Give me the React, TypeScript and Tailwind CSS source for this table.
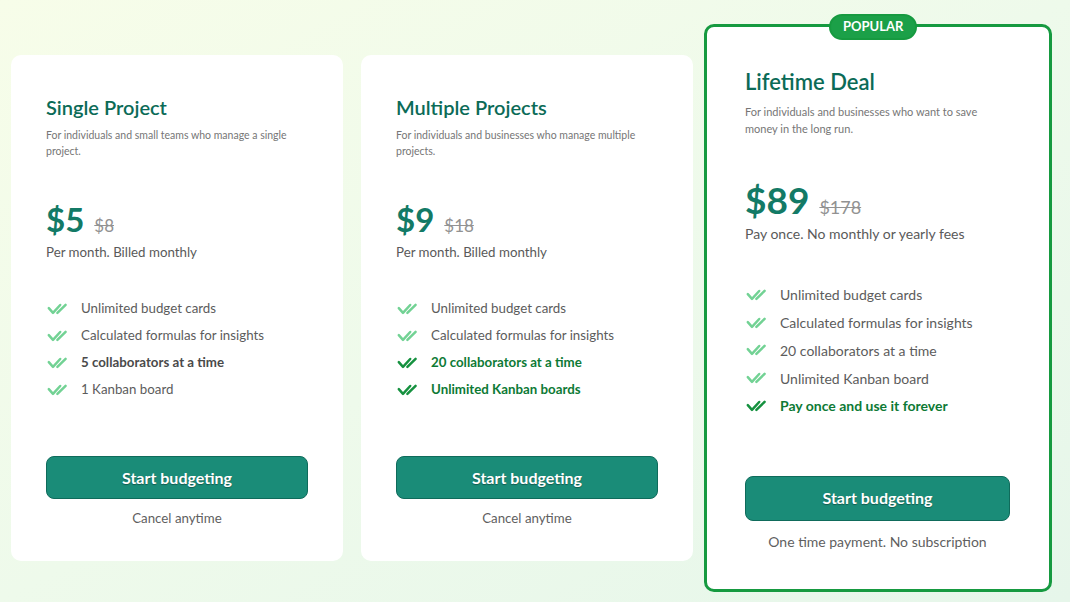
type Feature = { text: string; tone?: "plain" | "bold" | "strong" };

type Plan = {
  name: string;
  blurb: string;
  price: string;
  was: string;
  period: string;
  features: Feature[];
  note: string;
};

const plans: Plan[] = [
  {
    name: "Single Project",
    blurb: "For individuals and small teams who manage a single project.",
    price: "$5",
    was: "$8",
    period: "Per month. Billed monthly",
    features: [
      { text: "Unlimited budget cards" },
      { text: "Calculated formulas for insights" },
      { text: "5 collaborators at a time", tone: "bold" },
      { text: "1 Kanban board" },
    ],
    note: "Cancel anytime",
  },
  {
    name: "Multiple Projects",
    blurb: "For individuals and businesses who manage multiple projects.",
    price: "$9",
    was: "$18",
    period: "Per month. Billed monthly",
    features: [
      { text: "Unlimited budget cards" },
      { text: "Calculated formulas for insights" },
      { text: "20 collaborators at a time", tone: "strong" },
      { text: "Unlimited Kanban boards", tone: "strong" },
    ],
    note: "Cancel anytime",
  },
];

const lifetime: Plan = {
  name: "Lifetime Deal",
  blurb: "For individuals and businesses who want to save money in the long run.",
  price: "$89",
  was: "$178",
  period: "Pay once. No monthly or yearly fees",
  features: [
    { text: "Unlimited budget cards" },
    { text: "Calculated formulas for insights" },
    { text: "20 collaborators at a time" },
    { text: "Unlimited Kanban board" },
    { text: "Pay once and use it forever", tone: "strong" },
  ],
  note: "One time payment. No subscription",
};

// double tick, drawn by hand: the lucide one is too thin and too narrow here
function DoubleCheck({ className }: { className?: string }) {
  return (
    <svg viewBox="0 0 22 14" fill="none" stroke="currentColor" strokeWidth={2.5} strokeLinecap="round" strokeLinejoin="round" className={className}>
      <path d="M1.8 6.2 6 10.8 13.2 3" />
      <path d="M10.4 10.8 18.6 2.8" />
    </svg>
  );
}

function FeatureRow({ f, big }: { f: Feature; big?: boolean }) {
  const strong = f.tone === "strong";
  return (
    <li className={`flex items-center gap-[12px] ${big ? "h-[27.75px]" : "h-[27px]"}`}>
      <DoubleCheck className={`ml-[1px] h-[14px] w-[22px] shrink-0 ${strong ? "text-[#15913f]" : "text-[#72d294]"}`} />
      <span
        className={`${big ? "text-[14px]" : "text-[13.3px]"} ${
          strong
            ? "font-bold text-[#0d7a35]"
            : f.tone === "bold"
              ? "font-bold text-[#4a4a4a]"
              : "text-[#5c5c5c]"
        }`}
      >
        {f.text}
      </span>
    </li>
  );
}

function StartButton({ big }: { big?: boolean }) {
  return (
    <button
      type="button"
      className={`w-full rounded-[8px] border border-[#0f6b5b] bg-[#1a8c78] text-[16px] font-bold text-white [text-shadow:0_1px_1px_rgba(0,0,0,0.35)] ${
        big ? "h-[45px]" : "h-[43px]"
      }`}
    >
      Start budgeting
    </button>
  );
}

function PlanCard({ plan }: { plan: Plan }) {
  return (
    <div className="flex h-[506px] w-[332px] shrink-0 flex-col rounded-[10px] bg-white px-[35px] pt-[38px]">
      <h2 className="text-[20px] font-semibold leading-[28px] text-[#0b6b57]">{plan.name}</h2>
      <p className="mt-[6px] pr-[10px] text-[10.5px] leading-[16px] text-[#767676]">{plan.blurb}</p>
      <div className="mt-[40px] flex items-baseline gap-[10px]">
        <span className="text-[33px] font-bold leading-[40px] text-[#137a66]">{plan.price}</span>
        <span className="text-[17px] text-[#929292] line-through">{plan.was}</span>
      </div>
      <p className="mt-[3px] text-[13.3px] leading-[20px] text-[#5a5a5a]">{plan.period}</p>
      <ul className="mt-[33px]">
        {plan.features.map((f) => (
          <FeatureRow key={f.text} f={f} />
        ))}
      </ul>
      <div className="mt-[53px]">
        <StartButton />
      </div>
      <p className="mt-[9px] text-center text-[13.3px] leading-[20px] text-[#5f5f5f]">{plan.note}</p>
    </div>
  );
}

function PopularCard({ plan }: { plan: Plan }) {
  return (
    <div className="relative flex h-[568px] w-[348px] shrink-0 flex-col rounded-[10px] border-[3px] border-[#169a40] bg-white pl-[38px] pr-[39px] pt-[40px]">
      <span className="absolute -top-[13px] left-[122px] flex h-[26px] items-center rounded-full border-2 border-[#169a40] bg-[#1ba048] px-[12px] text-[13px] font-bold text-white">
        POPULAR
      </span>
      <h2 className="text-[22px] font-semibold leading-[30px] text-[#0b6b57]">{plan.name}</h2>
      <p className="mt-[6px] pr-[20px] text-[11px] leading-[17px] text-[#767676]">{plan.blurb}</p>
      <div className="mt-[41px] flex items-baseline gap-[10px]">
        <span className="text-[37px] font-bold leading-[44px] text-[#137a66]">{plan.price}</span>
        <span className="text-[18px] text-[#929292] line-through">{plan.was}</span>
      </div>
      <p className="mt-[2px] text-[14px] leading-[20px] text-[#5a5a5a]">{plan.period}</p>
      <ul className="mt-[37px]">
        {plan.features.map((f) => (
          <FeatureRow key={f.text} f={f} big />
        ))}
      </ul>
      <div className="mt-[56px]">
        <StartButton big />
      </div>
      <p className="mt-[11px] text-center text-[14px] leading-[20px] text-[#5f5f5f]">{plan.note}</p>
    </div>
  );
}

export default function App() {
  return (
    <div className="h-[602px] w-[1070px] overflow-hidden bg-gradient-to-br from-[#f7fde9] via-[#eefaeb] to-[#e6f6ea] font-['Lato','Noto_Sans',sans-serif]">
      <div className="flex items-start pl-[11px] pt-[24px]">
        <div className="mt-[31px]">
          <PlanCard plan={plans[0]} />
        </div>
        <div className="ml-[18px] mt-[31px]">
          <PlanCard plan={plans[1]} />
        </div>
        <div className="ml-[11px]">
          <PopularCard plan={lifetime} />
        </div>
      </div>
    </div>
  );
}
